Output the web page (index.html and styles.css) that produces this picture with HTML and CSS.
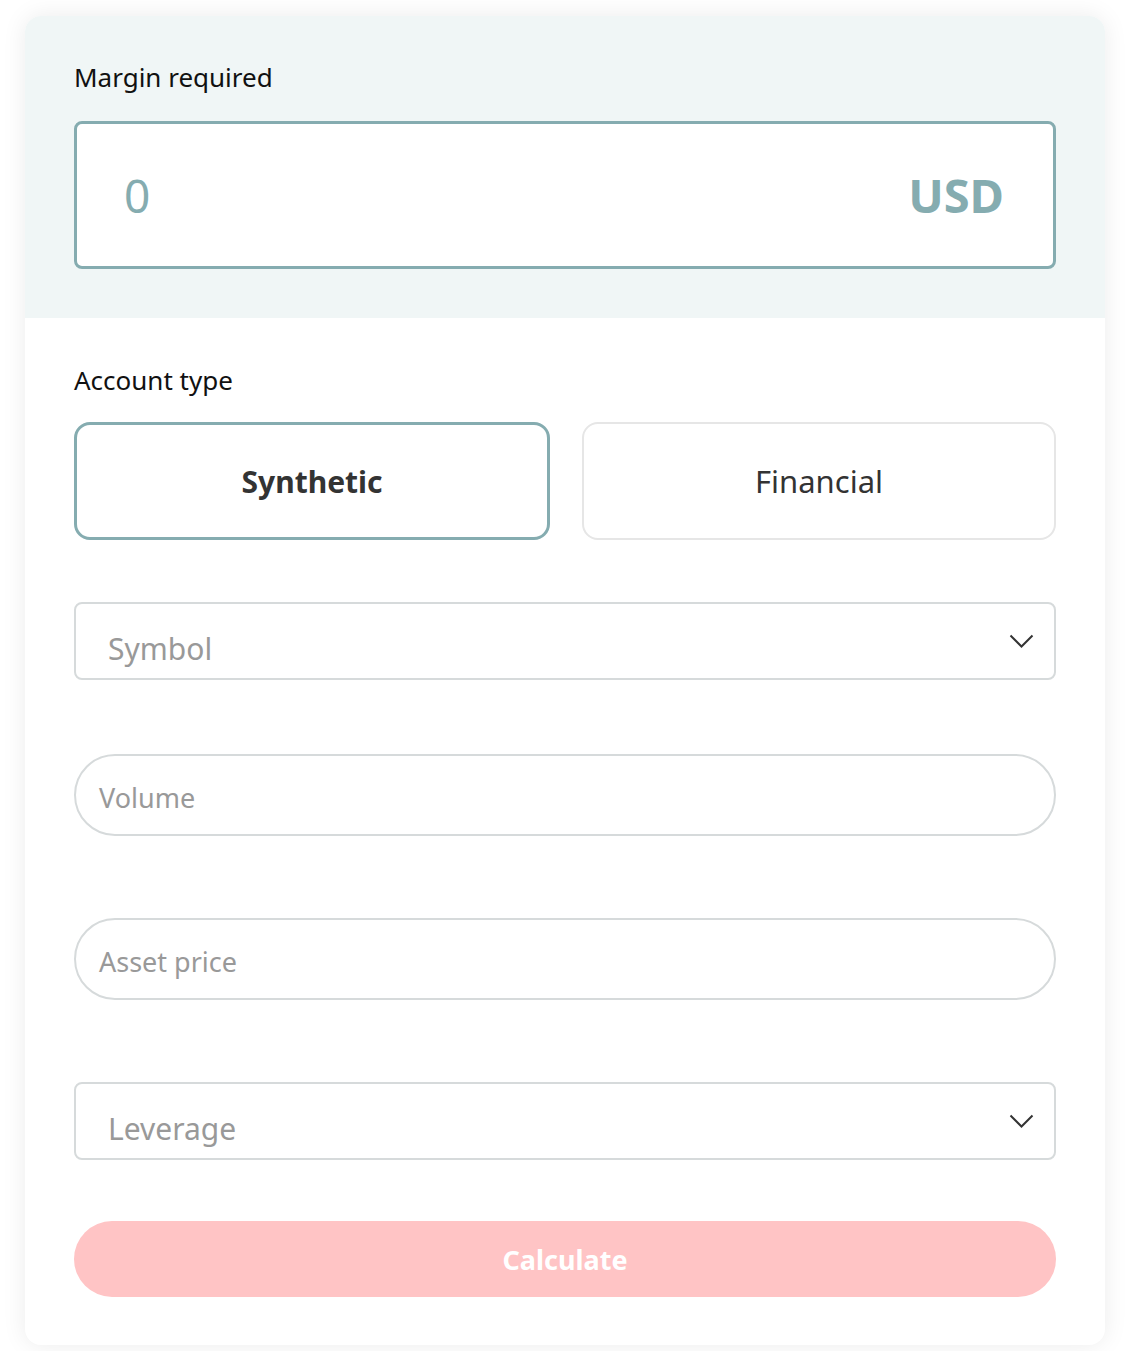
FILE: index.html
```html
<!DOCTYPE html>
<html lang="en">
<head>
<meta charset="utf-8">
<title>Margin calculator</title>
<link rel="stylesheet" href="styles.css">
</head>
<body>
<div class="card">
  <section class="result">
    <div class="label">Margin required</div>
    <div class="output">
      <span class="value">0</span>
      <span class="currency">USD</span>
    </div>
  </section>
  <section class="form">
    <div class="label label-account">Account type</div>
    <div class="tabs">
      <div class="tab tab-active">Synthetic</div>
      <div class="tab">Financial</div>
    </div>
    <div class="select select-symbol">
      <span class="select-text">Symbol</span>
      <svg class="chevron" width="25" height="15" viewBox="0 0 25 15"><path d="M1.5 1.5 L12.5 12.5 L23.5 1.5" fill="none" stroke="#333" stroke-width="2"/></svg>
    </div>
    <div class="input input-volume"><span class="input-text">Volume</span></div>
    <div class="input input-price"><span class="input-text">Asset price</span></div>
    <div class="select select-leverage">
      <span class="select-text">Leverage</span>
      <svg class="chevron" width="25" height="15" viewBox="0 0 25 15"><path d="M1.5 1.5 L12.5 12.5 L23.5 1.5" fill="none" stroke="#333" stroke-width="2"/></svg>
    </div>
    <div class="button">Calculate</div>
  </section>
</div>
</body>
</html>
```

FILE: styles.css
```css
html, body {
  margin: 0;
  padding: 0;
  background: #ffffff;
}
body {
  padding: 16px 30px 6px 25px;
  font-family: "Noto Sans", "DejaVu Sans", sans-serif;
  color: #111;
}
.card {
  width: 1080px;
  background: #fff;
  border-radius: 16px;
  box-shadow: 0 0 24px rgba(0, 0, 0, 0.08);
  overflow: hidden;
}
.result {
  background: #f0f6f6;
  padding: 43px 49px 49px 49px;
}
.label {
  font-size: 26px;
  line-height: 36px;
  color: #111;
}
.output {
  margin-top: 26px;
  height: 148px;
  box-sizing: border-box;
  border: 3px solid #85acb0;
  border-radius: 8px;
  background: #fff;
  display: flex;
  align-items: center;
  justify-content: space-between;
  padding: 0 49px 0 47px;
}
.value {
  font-size: 46px;
  color: #85acb0;
}
.currency {
  font-size: 47px;
  font-weight: 700;
  color: #85acb0;
}
.form {
  padding: 44px 49px 48px 49px;
  display: flex;
  flex-direction: column;
}
.label-account {
  margin-bottom: 24px;
}
.tabs {
  display: flex;
  gap: 32px;
}
.tab {
  flex: 1;
  height: 118px;
  box-sizing: border-box;
  border: 2px solid #e6e6e6;
  border-radius: 16px;
  display: flex;
  align-items: center;
  justify-content: center;
  font-size: 31px;
  color: #333;
}
.tab-active {
  border: 3px solid #85acb0;
  font-weight: 700;
  font-size: 30px;
}
.select {
  height: 78px;
  box-sizing: border-box;
  border: 2px solid #d6dadb;
  border-radius: 8px;
  display: flex;
  align-items: center;
  justify-content: space-between;
  padding: 14px 20px 0 32px;
}
.select-symbol {
  margin-top: 62px;
}
.select-leverage {
  margin-top: 82px;
}
.select-text {
  font-size: 30px;
  color: #999;
}
.chevron {
  margin-top: -13px;
}
.input {
  height: 82px;
  box-sizing: border-box;
  border: 2px solid #d6dadb;
  border-radius: 41px;
  display: flex;
  align-items: center;
  padding: 4px 0 0 23px;
}
.input-volume {
  margin-top: 74px;
}
.input-price {
  margin-top: 82px;
}
.input-text {
  font-size: 27px;
  color: #999;
}
.button {
  margin-top: 61px;
  height: 76px;
  border-radius: 38px;
  background: #ffc4c5;
  color: #fff;
  font-weight: 700;
  font-size: 27px;
  display: flex;
  align-items: center;
  justify-content: center;
}
```
